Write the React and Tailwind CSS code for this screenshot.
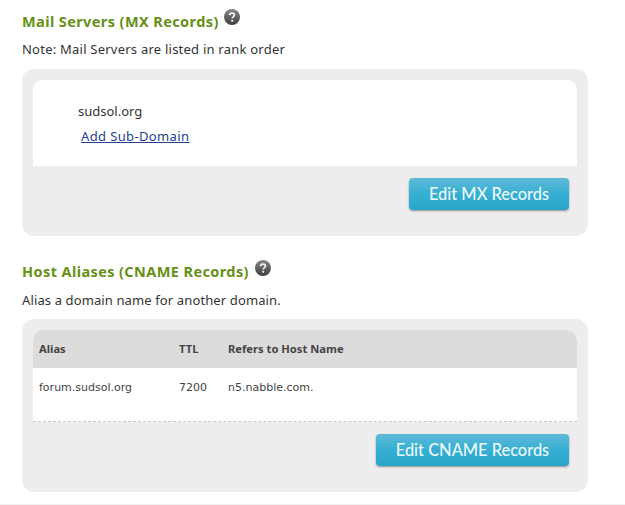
const font = { fontFamily: '"Noto Sans", sans-serif' };
const dejavu = { fontFamily: '"DejaVu Sans", sans-serif' };

function Help({ id }) {
  return (
    <svg width="16" height="16" viewBox="0 0 16 16" className="shrink-0">
      <defs>
        <linearGradient id={id} x1="0" y1="0" x2="0" y2="1">
          <stop offset="0" stopColor="#8a8a8a" />
          <stop offset="1" stopColor="#3c3c3c" />
        </linearGradient>
      </defs>
      <circle cx="8" cy="8" r="8" fill={`url(#${id})`} />
      <path d="M5.6 6.2C5.7 4.8 6.7 4.1 8 4.1c1.4 0 2.4.8 2.4 2 0 1.7-2.2 1.7-2.2 3.4" fill="none" stroke="#f2f2f2" strokeWidth="1.7" />
      <circle cx="8.2" cy="11.8" r="1.1" fill="#f2f2f2" />
    </svg>
  );
}

function Title({ children, iconClass, id }) {
  return (
    <div className="flex items-start h-[26px] pl-[22px]">
      <h2 className="text-[14.5px] leading-[26px] font-bold text-[#669014] tracking-[0.4px] whitespace-nowrap" style={font}>{children}</h2>
      <span className={iconClass}><Help id={id} /></span>
    </div>
  );
}

function EditButton({ width, children }) {
  return (
    <button className={`${width} h-[32px] rounded-[4px] bg-gradient-to-b from-[#5cbad8] via-[#35afd2] to-[#2aa5cb] shadow-[0_1px_2px_rgba(70,70,70,0.55)] text-[#eefafd] text-[16.4px] font-medium leading-[32px] text-center whitespace-nowrap`} style={{ fontFamily: 'Lato, sans-serif' }}>
      {children}
    </button>
  );
}

export default function App() {
  return (
    <div className="w-[625px] h-[505px] bg-white overflow-hidden relative text-[#333333]" style={font}>
      <div className="pt-[8px]">
        <Title id="h1" iconClass="ml-[5px] mt-[1px]">Mail Servers (MX Records)</Title>
        <p className="pl-[22px] mt-[4px] h-[31px] text-[13px] leading-[22px] tracking-[0.23px] text-[#333]">Note: Mail Servers are listed in rank order</p>
        <div className="mx-[22px] w-[566px] h-[167px] rounded-[12px] bg-[#ededed] p-[11px]">
          <div className="h-[86px] rounded-t-[10px] bg-white pl-[45px] pt-[22px]">
            <div className="text-[13px] leading-[18px] text-[#333]">sudsol.org</div>
            <a className="block ml-[3px] mt-[7px] text-[13px] leading-[18px] tracking-[0.37px] text-[#22418f] underline">Add Sub-Domain</a>
          </div>
          <div className="flex justify-end pt-[12px] pr-[8px]">
            <EditButton width="w-[160px]">Edit MX Records</EditButton>
          </div>
        </div>
        <div className="mt-[22px]">
          <Title id="h2" iconClass="ml-[6px] mt-[2px]">Host Aliases (CNAME Records)</Title>
        </div>
        <p className="pl-[22px] mt-[5px] h-[30px] text-[13px] leading-[22px] tracking-[0.12px] text-[#333]">Alias a domain name for another domain.</p>
        <div className="mx-[22px] w-[566px] h-[173px] rounded-[12px] bg-[#ededed] p-[11px]">
          <div className="h-[92px] rounded-t-[10px] overflow-hidden bg-white border-b border-dashed border-[#c8c8c8]">
            <div className="h-[38px] bg-[#dcdcdc] flex items-center pl-[6px] text-[11.2px] font-bold text-[#444]">
              <span className="w-[140px]">Alias</span>
              <span className="w-[49px]">TTL</span>
              <span>Refers to Host Name</span>
            </div>
            <div className="h-[38px] pt-[2px] flex items-center pl-[6px] text-[11px] text-[#444]" style={dejavu}>
              <span className="w-[140px]">forum.sudsol.org</span>
              <span className="w-[49px]">7200</span>
              <span>n5.nabble.com.</span>
            </div>
          </div>
          <div className="flex justify-end pt-[12px] pr-[8px]">
            <EditButton width="w-[193px]">Edit CNAME Records</EditButton>
          </div>
        </div>
      </div>
      <div className="absolute left-0 right-0 bottom-0 h-px bg-[#f0f0f0]" />
    </div>
  );
}
